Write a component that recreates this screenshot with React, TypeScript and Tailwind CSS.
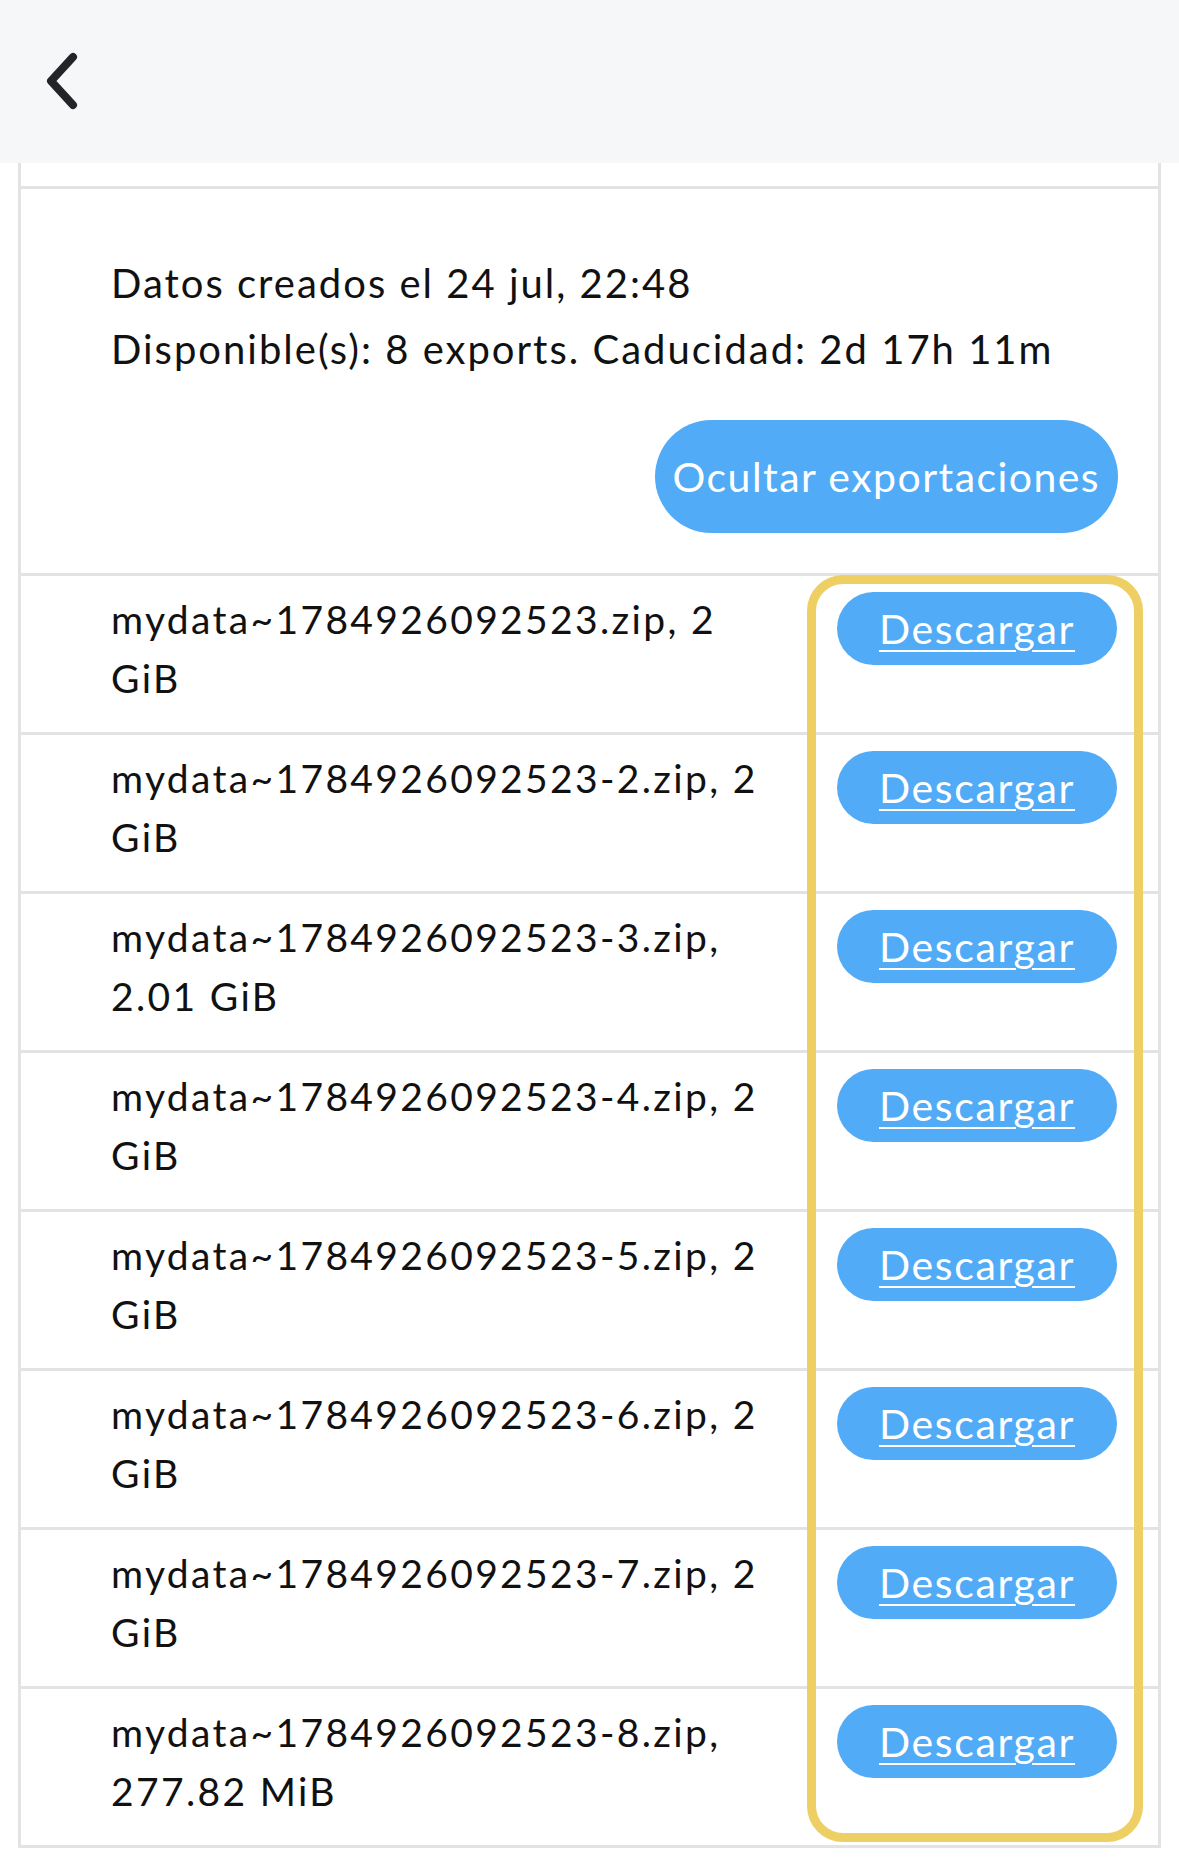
const exportsList = [
  { name: 'mydata~1784926092523.zip', size: '2 GiB' },
  { name: 'mydata~1784926092523-2.zip', size: '2 GiB' },
  { name: 'mydata~1784926092523-3.zip', size: '2.01 GiB' },
  { name: 'mydata~1784926092523-4.zip', size: '2 GiB' },
  { name: 'mydata~1784926092523-5.zip', size: '2 GiB' },
  { name: 'mydata~1784926092523-6.zip', size: '2 GiB' },
  { name: 'mydata~1784926092523-7.zip', size: '2 GiB' },
  { name: 'mydata~1784926092523-8.zip', size: '277.82 MiB' },
];

function BackChevron() {
  return (
    <svg width="40" height="60" viewBox="0 0 40 60" fill="none">
      <path
        d="M33 5 L11 29 L33 53"
        stroke="#222428"
        strokeWidth="8"
        strokeLinecap="round"
        strokeLinejoin="round"
      />
    </svg>
  );
}

function ExportRow({ name, size }: { name: string; size: string }) {
  return (
    <div className="flex h-[159px] border-b-[3px] border-[#e3e3e3]">
      <div className="w-[770px] pl-[90px] pt-[14px] text-[39px] leading-[59px] tracking-[0.06em] text-[#111]">
        {name}, {size}
      </div>
      <div className="flex flex-1 justify-end pr-[41px] pt-[16px]">
        <button className="h-[73px] w-[280px] rounded-full bg-[#52abf6] text-[41px] tracking-[0.04em] text-white underline decoration-2 underline-offset-[6px]">
          Descargar
        </button>
      </div>
    </div>
  );
}

export default function App() {
  return (
    <div className="min-h-[1872px] w-full overflow-hidden bg-white font-['Lato',sans-serif]">
      <header className="flex h-[163px] items-center bg-[#f6f7f9] pl-[40px]">
        <BackChevron />
      </header>

      <div className="mx-[18px] border-x-[3px] border-[#e3e3e3]">
        <div className="h-[26px] border-b-[3px] border-[#e3e3e3]" />

        <section className="border-b-[3px] border-[#e3e3e3] pb-[40px] pl-[90px] pr-[40px] pt-[61px]">
          <p className="text-[40px] leading-[66px] tracking-[0.05em] text-[#111]">Datos creados el 24 jul, 22:48</p>
          <p className="text-[40px] leading-[66px] tracking-[0.05em] text-[#111]">
            Disponible(s): 8 exports. Caducidad: 2d 17h 11m
          </p>
          <div className="mt-[38px] flex justify-end">
            <button className="h-[113px] rounded-full bg-[#52abf6] px-[18px] text-[41px] tracking-[0.035em] text-white">
              Ocultar exportaciones
            </button>
          </div>
        </section>

        <div className="relative">
          {exportsList.map((e) => (
            <ExportRow key={e.name} name={e.name} size={e.size} />
          ))}
          <div className="pointer-events-none absolute right-[15px] top-[-1px] h-[1267px] w-[336px] rounded-[36px] border-[9px] border-[#eecf63]" />
        </div>
      </div>
    </div>
  );
}
